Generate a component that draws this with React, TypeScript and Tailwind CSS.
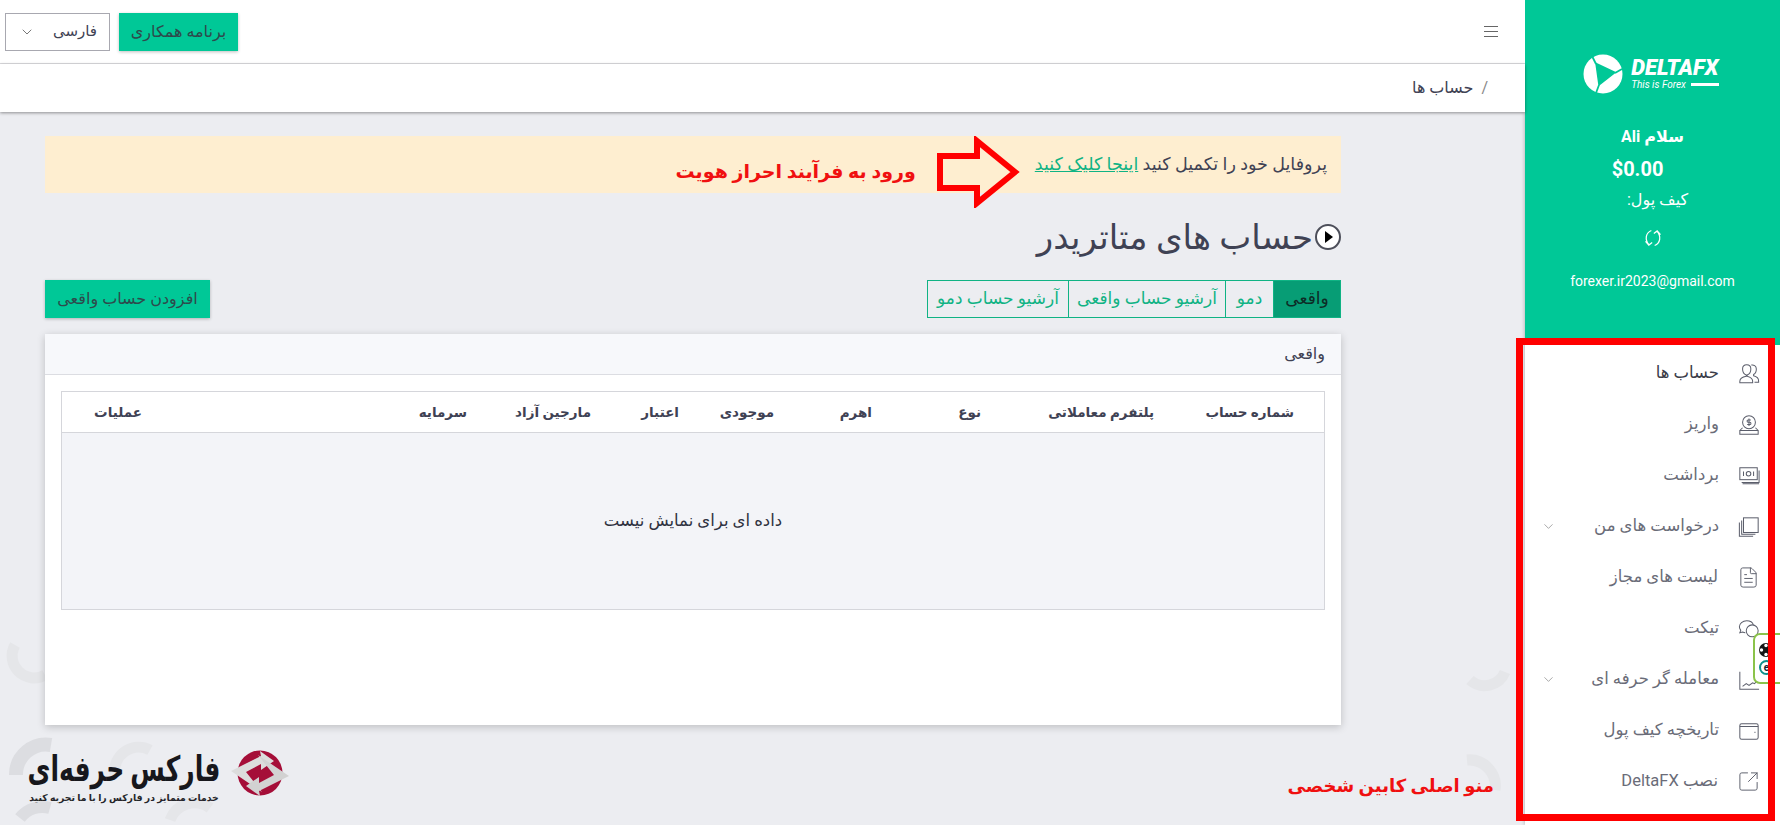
import { ChevronDown, FileText, SquareArrowOutUpRight } from "lucide-react";
import type { ReactNode } from "react";

const FONT = "font-['Roboto','DejaVu_Sans',sans-serif]";

function Icon({ children }: { children: ReactNode }) {
  return (
    <svg viewBox="0 0 24 24" fill="none" stroke="#5b5e6b" strokeWidth="1.1" className="h-[22px] w-[22px] shrink-0">
      {children}
    </svg>
  );
}

const menu = [
  {
    label: "حساب ها",
    active: true,
    icon: (
      <Icon>
        <path d="M9 13c-3-1-4-4-4-6.500C5 3.800 7 2 9.500 2S14 3.800 14 6.500c0 2.500-1 5.500-4 6.500v1.500c3 .8 6 2 6 5.500v1.500H2V20c0-3.500 3-4.700 7-5.500z" />
        <path d="M14.500 2.300c2.500-.7 5.500 1 5.500 4.200 0 2.500-1 5-3 6v1.500c3 .8 5.500 2 5.500 5.500v1.500H18" />
      </Icon>
    ),
  },
  {
    label: "واریز",
    icon: (
      <Icon>
        <circle cx="12" cy="9" r="7" />
        <path d="M14 6.500h-3c-1.500 0-1.500 2.500 0 2.500h2c1.500 0 1.500 2.500 0 2.500h-3M12 5v8" />
        <path d="M2 18l3-3M22 18l-3-3M2 18h20v4H2z" />
      </Icon>
    ),
  },
  {
    label: "برداشت",
    icon: (
      <Icon>
        <rect x="2" y="3" width="19" height="13" />
        <path d="M23 6v13H4M5 20.500h18" />
        <circle cx="11.500" cy="9.500" r="2.500" />
        <path d="M6 7v5M17 7v5" />
      </Icon>
    ),
  },
  {
    label: "درخواست های من",
    chevron: true,
    icon: (
      <Icon>
        <rect x="6" y="2" width="16" height="16" />
        <path d="M4 5v15h15M1.500 7v15h15" />
      </Icon>
    ),
  },
  { label: "لیست های مجاز", icon: <FileText size={23} strokeWidth={1} color="#5b5e6b" className="shrink-0" /> },
  {
    label: "تیکت",
    icon: (
      <Icon>
        <path d="M8 16c-1 0-2-.3-3-.8L2 16l1-2.500C2 12 1.500 10.800 1.500 9.500 1.500 6 5 3 9.500 3c3.500 0 6.500 2 7.300 4.500" />
        <circle cx="15.500" cy="14" r="6.500" />
        <path d="M19 19.500l2.500 2-.5-4" />
      </Icon>
    ),
  },
  {
    label: "معامله گر حرفه ای",
    chevron: true,
    icon: (
      <Icon>
        <path d="M2 3v19h21" />
        <path d="M5 19l4-3 3 2 4-3 2 1 4-4" />
      </Icon>
    ),
  },
  {
    label: "تاریخچه کیف پول",
    icon: (
      <Icon>
        <path d="M4 4h16a2 2 0 0 1 2 2v13a2 2 0 0 1-2 2H4a2 2 0 0 1-2-2V6a2 2 0 0 1 2-2z" />
        <path d="M2 7h20M18 13.500h1" />
      </Icon>
    ),
  },
  { label: "نصب DeltaFX", icon: <SquareArrowOutUpRight size={23} strokeWidth={1} color="#5b5e6b" className="shrink-0" /> },
];

const columns = ["شماره حساب", "پلتفرم معاملاتی", "نوع", "اهرم", "موجودی", "اعتبار", "مارجین آزاد", "سرمایه", "عملیات"];

function Sidebar() {
  return (
    <aside className="flex w-[255px] shrink-0 flex-col bg-white shadow-[0_0_4px_rgba(0,0,0,0.3)]">
      <div className="flex h-[345px] flex-col items-center bg-[#00c897] pt-[54px] text-white">
        <div dir="ltr" className="flex items-center gap-[8px] pr-[3px]">
          <svg viewBox="0 0 40 40" className="h-[40px] w-[40px]">
            <circle cx="20" cy="20" r="19.500" fill="#fff" />
            <path d="M13 9.500L32 18.500 16 31z" fill="#00c897" stroke="#00c897" strokeWidth="1.500" strokeLinejoin="round" />
            <path d="M9 2l4 8M32 19l7-4M16 31l-3 8" stroke="#00c897" strokeWidth="1.800" />
          </svg>
          <div className="flex flex-col">
            <span className="font-['Roboto',sans-serif] text-[22px]/[21px] font-black italic">DELTAFX</span>
            <div className="flex items-center gap-[5px]">
              <span className="font-['Roboto',sans-serif] text-[10px]/[13px] italic">This is Forex</span>
              <span className="h-[3px] w-[28px] bg-white" />
            </div>
          </div>
        </div>
        <p className="mt-[32px] text-[16px]/[22px] font-bold">سلام Ali</p>
        <p dir="ltr" className="mt-[9px] pr-[30px] font-['Roboto',sans-serif] text-[20px]/[24px] font-bold">$0.00</p>
        <p className="mt-[8px] pl-[10px] text-[16px]/[22px]">کیف پول:</p>
        <svg viewBox="0 0 24 24" fill="none" stroke="#fff" strokeWidth="1.500" className="mt-[17px] h-[20px] w-[20px]">
          <path d="M10 3C3 6 2 14 7 20M3 16l4 4.500 4-3" />
          <path d="M14 21c7-3 8-11 3-17M21 8l-4-4.500-4 3" />
        </svg>
        <p className="mt-[23px] font-['Roboto',sans-serif] text-[14px]/[20px]">forexer.ir2023@gmail.com</p>
      </div>
      <nav className="flex flex-col pt-[3px]">
        {menu.map((item) => (
          <div key={item.label} className="flex h-[51px] items-center gap-[19px] pr-[20px] pl-[16px]">
            {item.icon}
            <span className={`text-[16.500px] ${item.active ? "text-[#3a3c48]" : "text-[#6a6c78]"}`}>{item.label}</span>
            {item.chevron && <ChevronDown size={15} strokeWidth={1} color="#777" className="mr-auto" />}
          </div>
        ))}
      </nav>
    </aside>
  );
}

function Topbar() {
  return (
    <>
      <header className="flex h-[64px] items-center justify-between border-b border-[#dddde0] bg-white pr-[27px] pl-[5px]">
        <div className="flex flex-col gap-[4px]">
          <span className="h-px w-[14px] bg-[#666]" />
          <span className="h-px w-[14px] bg-[#666]" />
          <span className="h-px w-[14px] bg-[#666]" />
        </div>
        <div className="flex items-center gap-[9px]">
          <button className="h-[38px] w-[119px] bg-[#00c897] text-[16px] text-[#2e4a4c] shadow-[0_1px_3px_rgba(0,0,0,0.25)]">برنامه همکاری</button>
          <div className="flex h-[38px] w-[105px] items-center justify-between border border-[#a8a8b0] bg-white pr-[12px] pl-[13px] text-[15px] text-[#3f4254]">
            <span>فارسی</span>
            <ChevronDown size={16} strokeWidth={1.2} color="#555" />
          </div>
        </div>
      </header>
      <div className="flex h-[48px] items-center gap-[8px] bg-white pr-[37px] text-[16px] text-[#3f4254] shadow-[0_1px_3px_rgba(0,0,0,0.4)]">
        <span className="text-[#888]">/</span>
        <span>حساب ها</span>
      </div>
    </>
  );
}

function Watermark() {
  return (
    <div className="absolute inset-0 overflow-hidden">
      <svg viewBox="0 0 1525 825" className="h-full w-full" fill="none" stroke="#e5e6e9" strokeWidth="11">
        <path d="M15 645a22 22 0 0 0 30 30" />
        <path d="M16 775a30 30 0 0 1 35-30" stroke="#dcdde1" strokeWidth="14" />
        <path d="M20 818a28 28 0 0 1 30-10" stroke="#dcdde1" strokeWidth="12" />
        <path d="M115 775a24 24 0 0 1 35-25" />
        <path d="M170 820a26 26 0 0 1 40-12" />
        <path d="M1495 790a26 26 0 0 0-28-30" />
        <path d="M1470 680a22 22 0 0 0 35-8" />
      </svg>
    </div>
  );
}

function BottomLogo() {
  return (
    <div dir="ltr" className="absolute top-[750px] left-[30px] flex items-start gap-[12px]">
      <div dir="rtl" className="flex w-[188px] flex-col items-center">
        <p className="h-[40px] origin-center scale-y-[1.4] whitespace-nowrap text-[25px]/[40px] font-bold text-[#17171c]">فارکس حرفه‌ای</p>
        <p className="mt-[1px] whitespace-nowrap text-[9.300px]/[14px] font-bold text-[#25252a]">خدمات متمایز در فارکس را با ما تجربه کنید</p>
      </div>
      <svg viewBox="0 0 60 46" className="h-[46px] w-[60px]">
        <circle cx="30" cy="23" r="22.500" fill="#a50e38" />
        <path d="M1 21 L31 6 L30 1 L44 11 L31 20 L31 14 L16 22 L32 42 z" fill="#dcdcdc" />
        <path d="M59 26 L29 41 L30 46 L16 36 L29 27 L29 33 L44 25 L28 5 z" fill="#d2d2d2" />
      </svg>
    </div>
  );
}

function Content() {
  return (
    <div className="pr-[184px] pl-[45px] pt-[24px]">
      <div className="flex h-[57px] items-center bg-[#feeed0] pr-[14px]">
        <p className="whitespace-nowrap text-[17.500px] text-[#3f4254]">
          پروفایل خود را تکمیل کنید <a className="text-[#10b384] underline">اینجا کلیک کنید </a>
        </p>
        <svg viewBox="0 0 83 72" className="relative z-10 mr-[15px] h-[72px] w-[83px] shrink-0 self-start" fill="none" stroke="#ff0000" strokeWidth="6">
          <path d="M78 36 L40 5 L40 20 L3 20 L3 52 L40 52 L40 67 z" />
        </svg>
        <p className="mt-[16px] mr-[21px] text-[19px] font-bold text-[#f01010]">ورود به فرآیند احراز هویت</p>
      </div>

      <div className="mt-[26px] flex items-center gap-[2px]">
        <span className="flex h-[26px] w-[26px] items-center justify-center rounded-full border-2 border-[#4d4f5a] bg-white">
          <span className="ml-[2px] h-0 w-0 border-y-[6px] border-l-[8px] border-y-transparent border-l-black" />
        </span>
        <h1 className="text-[34px]/[36px] font-normal text-[#3f4254]">حساب های متاتریدر</h1>
      </div>

      <div className="mt-[25px] flex items-center justify-between">
        <div className="flex h-[38px] border border-[#10b384] text-[17px] text-[#10b384]">
          <span className="flex w-[66px] items-center justify-center bg-[#079d75] text-[#0d2b26]">واقعی</span>
          <span className="flex w-[48px] items-center justify-center border-r border-[#10b384]">دمو</span>
          <span className="flex w-[157px] items-center justify-center border-r border-[#10b384]">آرشیو حساب واقعی</span>
          <span className="flex w-[141px] items-center justify-center border-r border-[#10b384]">آرشیو حساب دمو</span>
        </div>
        <button className="h-[38px] w-[165px] bg-[#00c897] text-[16px] text-[#2e4a4c] shadow-[0_1px_3px_rgba(0,0,0,0.25)]">افزودن حساب واقعی</button>
      </div>

      <section className="relative mt-[16px] h-[391px] bg-white shadow-[0_2px_8px_rgba(0,0,0,0.2)]">
        <div className="flex h-[41px] items-center border-b border-[#dcdde2] bg-[#f7f8fb] pr-[16px] text-[16px] text-[#3f4254]">واقعی</div>
        <div className="mx-[16px] mt-[16px] border border-[#d5d6db]">
          <div className="grid h-[41px] grid-cols-[140px_173px_109px_98px_95px_88px_124px_325px_1fr] items-center border-b border-[#d5d6db] pr-[30px] text-[13.500px] font-bold text-[#3f4254]">
            {columns.map((c) => (
              <span key={c} className="whitespace-nowrap">{c}</span>
            ))}
          </div>
          <div className="flex h-[176px] items-center justify-center bg-[#f3f4f8] text-[16.500px] text-[#2f3140]">داده ای برای نمایش نیست</div>
        </div>
      </section>
    </div>
  );
}

export default function App() {
  return (
    <div dir="rtl" className={`relative flex h-[825px] w-[1780px] overflow-hidden bg-[#ecedf1] ${FONT}`}>
      <Sidebar />
      <main className="relative min-w-0 flex-1">
        <Watermark />
        <div className="relative">
          <Topbar />
          <Content />
        </div>
        <BottomLogo />
        {/* annotation next to the menu */}
        <p className="absolute top-[772px] right-[31px] text-[18px] font-bold text-[#f01010]">منو اصلی کابین شخصی</p>
      </main>
      {/* floating widget over the sidebar edge */}
      <div dir="ltr" className="absolute top-[633px] left-[1753px] flex h-[51px] w-[30px] flex-col items-start gap-[3px] rounded-l-[7px] border-2 border-[#8bc34a] bg-white pt-[8px] pl-[4px]">
        <svg viewBox="0 0 14 14" className="h-[14px] w-[14px]">
          <circle cx="7" cy="7" r="7" fill="#151515" />
          <circle cx="7" cy="2.500" r="1.700" fill="#fff" />
          <circle cx="7" cy="11.500" r="1.700" fill="#fff" />
          <circle cx="2.500" cy="7" r="1.700" fill="#fff" />
          <circle cx="11.500" cy="7" r="1.700" fill="#fff" />
        </svg>
        <span className="flex h-[15px] w-[15px] items-center justify-center rounded-full border-2 border-[#0f8f8a] font-['Roboto',sans-serif] text-[10px] font-bold text-[#123]">e</span>
      </div>
      {/* red annotation round the menu */}
      <div className="pointer-events-none absolute top-[338px] left-[1516px] h-[483px] w-[259px] border-[7px] border-[#ff0000]" />
    </div>
  );
}
